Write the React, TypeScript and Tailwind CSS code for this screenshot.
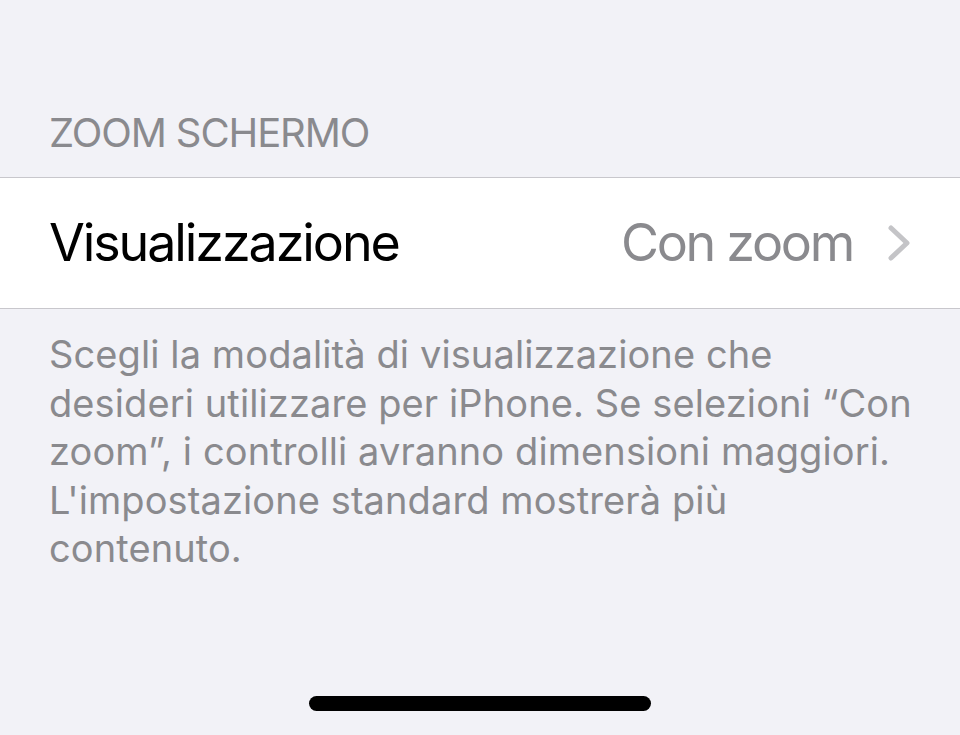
import React from "react";

export default function App() {
  return (
    <div
      className="w-[960px] h-[735px] bg-[#f2f2f7] flex flex-col overflow-hidden"
      style={{ fontFamily: "Inter, 'Noto Sans', sans-serif" }}
    >
      <div className="h-[177px] flex items-end pl-[49px] pb-[20px]">
        <div className="text-[40px] leading-[48px] text-[#8a8a8e] tracking-[-1.1px]">ZOOM SCHERMO</div>
      </div>
      <div className="h-[132px] bg-white border-y border-[#c8c7cc] flex items-center pl-[49px] pr-[50px]">
        <div className="flex-1 text-[52px] text-black tracking-[-2.1px]">Visualizzazione</div>
        <div className="text-[52px] text-[#8a8a8e] tracking-[-2.3px]">Con zoom</div>
        <svg className="ml-[35px]" width="22" height="36" viewBox="0 0 22 36" fill="none">
          <path d="M3 3 L19 18 L3 33" stroke="#c4c4c7" strokeWidth="5" strokeLinecap="round" strokeLinejoin="round" />
        </svg>
      </div>
      <div className="pl-[49px] pr-[46px] pt-[21px] text-[38px] leading-[48.5px] text-[#8a8a8e] tracking-[0.1px]">
        Scegli la modalità di visualizzazione che desideri utilizzare per iPhone. Se selezioni “Con zoom”, i controlli avranno dimensioni maggiori. L'impostazione standard mostrerà più contenuto.
      </div>
      <div className="flex-1" />
      <div className="flex justify-center pb-[24px]">
        <div className="w-[342px] h-[15px] rounded-full bg-black" />
      </div>
    </div>
  );
}
